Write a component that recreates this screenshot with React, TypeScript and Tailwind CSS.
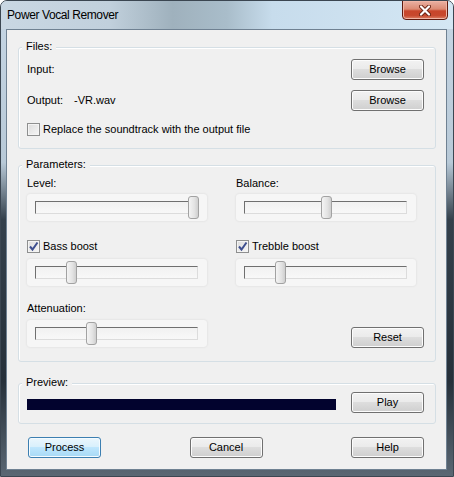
import React from "react";

function Btn({ label, primary }: { label: string; primary?: boolean }) {
  return (
    <button
      className={
        primary
          ? "h-[21px] w-[73px] rounded-[3px] border border-[#3c7fb1] bg-[linear-gradient(#eaf6fd_0%,#d9f0fc_45%,#bee6fd_50%,#a7d9f5_100%)] text-[11px] leading-[13px] text-black shadow-[inset_0_0_0_1px_#f4fbff]"
          : "h-[21px] w-[73px] rounded-[3px] border border-[#707070] bg-[linear-gradient(#f2f2f2_0%,#ebebeb_45%,#dddddd_50%,#cfcfcf_100%)] text-[11px] leading-[13px] text-black shadow-[inset_0_0_0_1px_#fcfcfc]"
      }
    >
      {label}
    </button>
  );
}

function Check({ checked, label }: { checked?: boolean; label: string }) {
  return (
    <div className="flex h-[13px] items-center gap-[3px]">
      <div className="relative h-[13px] w-[13px] border border-[#8e8f8f] bg-[linear-gradient(135deg,#dcdcdc,#f6f6f6)] shadow-[inset_0_0_0_1px_#f4f4f4]">
        {checked && (
          <svg width="11" height="11" viewBox="0 0 11 11" className="absolute left-0 top-0">
            <path d="M2 5.5 L4.5 8.5 L9.5 1.5" fill="none" stroke="#3e4f8f" strokeWidth="2" />
          </svg>
        )}
      </div>
      <span className="text-[11px] leading-[13px]">{label}</span>
    </div>
  );
}

function Slider({ thumb }: { thumb: string }) {
  return (
    <div className="relative h-[27px] w-[180px] rounded-[3px] bg-[#f6f6f6] px-[8px] pt-[7px] shadow-[0_0_2px_#d2d2d2]">
      <div className="h-[13px] w-[163px] border border-b-[#dcdcdc] border-l-[#6f6f6f] border-r-[#dcdcdc] border-t-[#6f6f6f] bg-[linear-gradient(#f1f1f1,#f8f8f8)]" />
      <div
        className={
          "absolute top-[2px] h-[23px] w-[11px] rounded-[3px] border border-[#a2a2a2] bg-[linear-gradient(to_right,#f4f4f4,#e3e3e3_60%,#cfcfcf)] " +
          thumb
        }
      />
    </div>
  );
}

function Group({ title, className, children }: { title: string; className: string; children: React.ReactNode }) {
  return (
    <div
      className={
        "relative ml-[11px] w-[418px] rounded-[3px] border border-[#d5dfe5] shadow-[inset_1px_1px_0_#fff] " + className
      }
    >
      <span className="absolute left-[3px] top-[-8px] bg-[#f0f0f0] px-[4px] text-[11px] leading-[13px]">{title}</span>
      {children}
    </div>
  );
}

export default function App() {
  return (
    <div className="h-[477px] w-[454px] overflow-hidden rounded-t-[7px] border border-[#3b4651] bg-[linear-gradient(#c6d6e4_0%,#b8c9d7_34%,#34404b_46%,#26303a_80%,#5a6773_100%)] font-['Liberation_Sans',Arial,sans-serif] text-black">
      {/* title bar */}
      <div className="flex h-[28px] items-start justify-between bg-[linear-gradient(to_right,#c9d7e3_0%,#c1d0dc_24%,#9fb1bd_38%,#a9bdca_50%,#c7dcec_60%,#d4e7f4_100%)] pl-[6px] pr-[5px]">
        <span className="mt-[8px] text-[12px] leading-[13px] tracking-[-0.4px] text-[#000]">Power Vocal Remover</span>
        <div className="mt-[-1px] flex h-[20px] w-[46px] items-center justify-center rounded-b-[4px] border border-[#5e1a0e] bg-[linear-gradient(#eab1a3_0%,#dc8a73_45%,#c8462b_55%,#c7482d_80%,#dc8066_100%)] shadow-[inset_0_0_0_1px_#f0b6a6]">
          <svg width="12" height="11" viewBox="0 0 12 11">
            <path d="M2 1.5 L10 9.5 M10 1.5 L2 9.5" stroke="#6b2414" strokeWidth="4" strokeLinecap="round" />
            <path d="M2 1.5 L10 9.5 M10 1.5 L2 9.5" stroke="#ffffff" strokeWidth="2.2" strokeLinecap="round" />
          </svg>
        </div>
      </div>

      {/* client */}
      <div className="ml-[5px] flex h-[441px] w-[441px] flex-col border border-[#6f8192] bg-[#f0f0f0]">
        <Group title="Files:" className="mt-[17px] h-[102px] pl-[8px] pr-[11px] pt-[11px]">
          <div className="flex h-[21px] items-center justify-between">
            <span className="text-[11px] leading-[13px]">Input:</span>
            <Btn label="Browse" />
          </div>
          <div className="mt-[10px] flex h-[21px] items-center justify-between">
            <div className="flex text-[11px] leading-[13px]">
              <span className="w-[47px]">Output:</span>
              <span>-VR.wav</span>
            </div>
            <Btn label="Browse" />
          </div>
          <div className="mt-[12px]">
            <Check label="Replace the soundtrack with the output file" />
          </div>
        </Group>

        <Group title="Parameters:" className="mt-[16px] h-[197px] pl-[8px] pr-[11px] pt-[11px]">
          <div className="grid grid-cols-[180px_180px] gap-x-[29px]">
            <div className="flex flex-col">
              <span className="text-[11px] leading-[13px]">Level:</span>
              <div className="mt-[4px]">
                <Slider thumb="left-[161px]" />
              </div>
              <div className="mt-[19px]">
                <Check checked label="Bass boost" />
              </div>
              <div className="mt-[6px]">
                <Slider thumb="left-[39px]" />
              </div>
            </div>
            <div className="flex flex-col">
              <span className="text-[11px] leading-[13px]">Balance:</span>
              <div className="mt-[4px]">
                <Slider thumb="left-[85px]" />
              </div>
              <div className="mt-[19px]">
                <Check checked label="Trebble boost" />
              </div>
              <div className="mt-[6px]">
                <Slider thumb="left-[39px]" />
              </div>
            </div>
          </div>
          <div className="mt-[16px] flex items-end justify-between">
            <div className="flex flex-col">
              <span className="text-[11px] leading-[13px]">Attenuation:</span>
              <div className="mt-[5px]">
                <Slider thumb="left-[59px]" />
              </div>
            </div>
            <div className="mb-[-1px]">
              <Btn label="Reset" />
            </div>
          </div>
        </Group>

        <Group title="Preview:" className="mt-[21px] h-[41px] pl-[8px] pr-[11px] pt-[8px]">
          <div className="flex items-start justify-between">
            <div className="mt-[7px] h-[11px] w-[309px] bg-[#02032e]" />
            <Btn label="Play" />
          </div>
        </Group>

        <div className="mt-[13px] flex justify-between pl-[21px] pr-[22px]">
          <Btn label="Process" primary />
          <Btn label="Cancel" />
          <Btn label="Help" />
        </div>
      </div>
    </div>
  );
}
